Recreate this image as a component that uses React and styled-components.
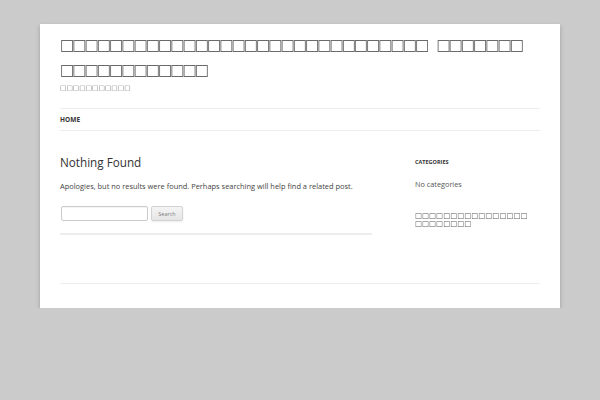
import styled, { createGlobalStyle } from "styled-components";

const GlobalStyle = createGlobalStyle`
  html, body {
    margin: 0;
    padding: 0;
    background: #cbcbcb;
  }
  body {
    font-family: "Open Sans", sans-serif;
    color: #444;
  }
`;

const Page = styled.div`
  width: 480px;
  margin: 24px auto 0;
  padding: 0 20px;
  background: #fff;
  box-shadow: 0 2px 4px rgba(100, 100, 100, 0.45);
`;

const Header = styled.header`
  padding-top: 9px;
`;

// the site's own script has no glyphs here, so it shows as boxes
const Boxes = styled.span`
  font-family: "DejaVu Sans", sans-serif;
  font-weight: normal;
  letter-spacing: ${(p) => p.$spacing || 0}px;
  word-spacing: ${(p) => p.$wordSpacing || 0}px;
`;

const SiteTitle = styled.h1`
  margin: 0;
  font-family: "DejaVu Sans", sans-serif;
  font-size: 15.5px;
  font-weight: normal;
  line-height: 25px;
  color: #6a6a6a;
  will-change: transform;
`;

const Tagline = styled.h2`
  margin: 0;
  font-family: "DejaVu Sans", sans-serif;
  font-size: 6.8px;
  font-weight: normal;
  line-height: 10px;
  color: #777;
  will-change: transform;
`;

const Nav = styled.nav`
  margin-top: 15px;
  border-top: 1px solid #ededed;
  border-bottom: 1px solid #ededed;
  height: 21px;
  display: flex;
  align-items: center;
`;

const NavLink = styled.a`
  font-size: 6.5px;
  font-weight: 700;
  text-transform: uppercase;
  color: #333;
  text-decoration: none;
  letter-spacing: 0.1px;
`;

const Main = styled.div`
  display: flex;
  padding-top: 23px;
`;

const Content = styled.section`
  width: 312px;
`;

const EntryTitle = styled.h1`
  margin: 0;
  font-size: 11.7px;
  font-weight: normal;
  line-height: 16px;
  color: #333;
`;

const Text = styled.p`
  margin: 10px 0 0;
  font-size: 7.45px;
  line-height: 12px;
  color: #444;
`;

const SearchForm = styled.form`
  display: flex;
  align-items: center;
  gap: 3px;
  margin-top: 14px;
  padding-left: 1px;
`;

const SearchInput = styled.input`
  box-sizing: border-box;
  width: 87px;
  height: 15px;
  border: 1px solid #ccc;
  border-radius: 2px;
  padding: 0 3px;
  font-size: 7px;
  box-shadow: inset 0 1px 1px rgba(0, 0, 0, 0.05);
`;

const SearchButton = styled.button`
  box-sizing: border-box;
  height: 15px;
  width: 32px;
  padding: 0;
  font-family: "Open Sans", sans-serif;
  font-size: 5.5px;
  color: #7c7c7c;
  border: 1px solid #d2d2d2;
  border-radius: 2px;
  background: linear-gradient(#f4f4f4, #e6e6e6);
  box-shadow: 0 1px 2px rgba(64, 64, 64, 0.1);
`;

const Divider = styled.div`
  margin-top: 12px;
  height: 2px;
  background: #ededed;
`;

const Sidebar = styled.aside`
  width: 125px;
  margin-left: auto;
`;

const WidgetTitle = styled.h3`
  margin: 0;
  padding-top: 5px;
  font-size: 5.5px;
  line-height: 6px;
  font-weight: 700;
  text-transform: uppercase;
  color: #333;
`;

const WidgetText = styled.p`
  margin: 14px 0 0;
  font-size: 7.3px;
  line-height: 10px;
  color: #555;
`;

const WidgetHeading = styled.h3`
  margin: 23px 0 0;
  font-family: "DejaVu Sans", sans-serif;
  font-size: 7.4px;
  font-weight: normal;
  line-height: 8px;
  color: #5a5a5a;
  will-change: transform;
`;

const Footer = styled.footer`
  margin-top: 48px;
  border-top: 1px solid #ededed;
  height: 24px;
`;

const box = (n) => "□".repeat(n);

export default function App() {
  return (
    <>
      <GlobalStyle />
      <Page>
        <Header>
          <SiteTitle>
            <Boxes $spacing={-2.4} $wordSpacing={6.5}>
              {box(30)} {box(7)} {box(12)}
            </Boxes>
          </SiteTitle>
          <Tagline>
            <Boxes>{box(11)}</Boxes>
          </Tagline>
        </Header>
        <Nav>
          <NavLink href="#">Home</NavLink>
        </Nav>
        <Main>
          <Content>
            <EntryTitle>Nothing Found</EntryTitle>
            <Text>
              Apologies, but no results were found. Perhaps searching will help
              find a related post.
            </Text>
            <SearchForm onSubmit={(e) => e.preventDefault()}>
              <SearchInput type="text" />
              <SearchButton type="submit">Search</SearchButton>
            </SearchForm>
            <Divider />
          </Content>
          <Sidebar>
            <WidgetTitle>Categories</WidgetTitle>
            <WidgetText>No categories</WidgetText>
            <WidgetHeading>
              <Boxes $spacing={0.05}>
                {box(16)} {box(8)}
              </Boxes>
            </WidgetHeading>
          </Sidebar>
        </Main>
        <Footer />
      </Page>
    </>
  );
}
